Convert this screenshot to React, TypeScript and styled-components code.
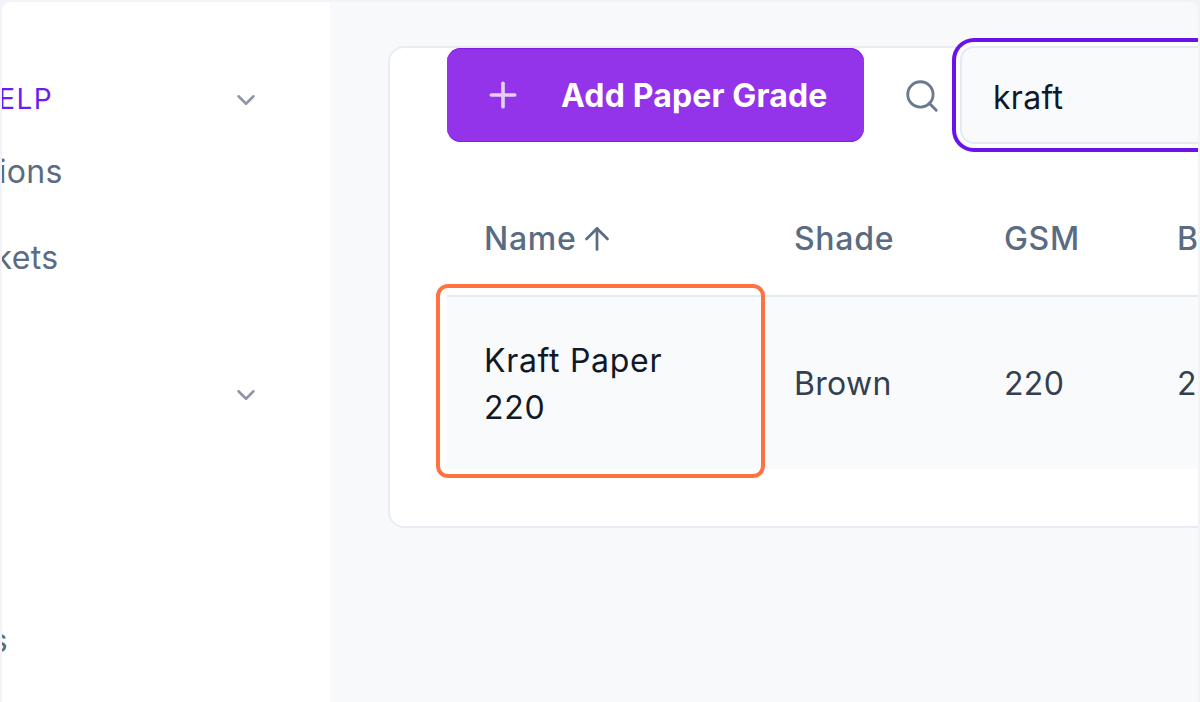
import React from 'react';
import styled, { createGlobalStyle } from 'styled-components';
import { ChevronDown, Plus, Search, ArrowUp } from 'lucide-react';

const GlobalStyle = createGlobalStyle`
  html, body {
    margin: 0;
    height: 100%;
    overflow: hidden;
  }
  body {
    font-family: Inter, "Liberation Sans", sans-serif;
    background: #f3f2f9;
  }
`;

const Frame = styled.div`
  display: flex;
  width: 1200px;
  height: 702px;
  box-sizing: border-box;
  padding: 2px 2px 0 2px;
  overflow: hidden;
  background: #f4f2f9;
`;

const Sidebar = styled.aside`
  width: 328px;
  flex-shrink: 0;
  box-sizing: border-box;
  padding-top: 75px;
  background: #fff;
  border-top-left-radius: 8px;
  overflow: hidden;
`;

const NavItem = styled.div<{ $active?: boolean; $height: number }>`
  display: flex;
  align-items: center;
  justify-content: space-between;
  height: ${props => props.$height}px;
  padding-right: 69px;
  font-size: ${props => (props.$active ? 28 : 32)}px;
  white-space: nowrap;
  color: ${props => (props.$active ? '#6d1cf0' : '#5a6b82')};
  letter-spacing: ${props => (props.$active ? '1.4px' : '0.3px')};
  svg {
    color: #8a96a8;
    flex-shrink: 0;
    margin-top: 2px;
  }
`;

const NavLabel = styled.span<{ $clip: number }>`
  margin-left: ${props => -props.$clip}px;
`;

const Main = styled.main`
  flex: 1;
  min-width: 0;
  padding: 44px 0 0 58px;
  background: #f8f9fb;
  border-top-right-radius: 8px;
  overflow: hidden;
`;

const Card = styled.section`
  width: 1000px;
  height: 482px;
  box-sizing: border-box;
  padding: 0 0 0 57px;
  background: #fff;
  border: 2px solid #e9edf3;
  border-radius: 16px;
`;

const Toolbar = styled.div`
  display: flex;
  align-items: center;
  height: 94px;
`;

const AddButton = styled.button`
  display: flex;
  align-items: center;
  width: 417px;
  height: 94px;
  box-sizing: border-box;
  padding: 0 0 0 36px;
  border: 0;
  border-radius: 14px;
  background: #9333ea;
  box-shadow: inset 0 -1px 0 #7e1fe0, inset 0 1px 0 #7e1fe0;
  color: #fff;
  font: 700 32px Inter, sans-serif;
  letter-spacing: 0.15px;
  white-space: nowrap;
  svg {
    color: #e4cffa;
    margin-right: 38px;
    flex-shrink: 0;
  }
`;

const SearchIcon = styled(Search)`
  margin: 2px 19px 0 39px;
  color: #6b7a8e;
  flex-shrink: 0;
`;

const SearchBox = styled.div`
  display: flex;
  align-items: center;
  width: 420px;
  height: 98px;
  box-sizing: border-box;
  padding: 4px 0 0 31px;
  border: 2px solid #e6ebf2;
  border-radius: 14px;
  background: #f8fafc;
  box-shadow: 0 0 0 4px #fff, 0 0 0 8px #6a12ea;
  font-size: 32px;
  letter-spacing: 0.3px;
  color: #111827;
`;

const TableWrap = styled.div`
  position: relative;
  margin-top: 50px;
`;

const Table = styled.table`
  width: 943px;
  border-collapse: collapse;
  table-layout: fixed;
`;

const HeadCell = styled.th<{ $width: number }>`
  width: ${props => props.$width}px;
  height: 104px;
  padding: 0 0 10px 37px;
  box-sizing: border-box;
  border-bottom: 2px solid #e4eaf2;
  text-align: left;
  vertical-align: middle;
  font-size: 32px;
  font-weight: 500;
  letter-spacing: 0.7px;
  color: #5a6b82;
  white-space: nowrap;
  svg {
    vertical-align: -7px;
    margin-left: 3px;
    color: #5a6b82;
  }
`;

const Row = styled.tr`
  background: #f8fafc;
`;

const Cell = styled.td<{ $dark?: boolean }>`
  height: 173px;
  padding: ${props => (props.$dark ? '2px' : '0')} 40px 0 37px;
  box-sizing: border-box;
  font-size: 32px;
  line-height: 47px;
  letter-spacing: ${props => (props.$dark ? '0.7px' : '0.3px')};
  color: ${props => (props.$dark ? '#111827' : '#333f50')};
`;

const Highlight = styled.div`
  position: absolute;
  left: -11px;
  top: 92px;
  width: 329px;
  height: 194px;
  box-sizing: border-box;
  border: 4px solid #ff7240;
  border-radius: 12px;
  pointer-events: none;
`;

const columns = [
  { label: 'Name', width: 310 },
  { label: 'Shade', width: 210 },
  { label: 'GSM', width: 173 },
  { label: 'BF', width: 250 },
];

export default function App() {
  return (
    <>
      <GlobalStyle />
      <Frame>
        <Sidebar>
          <NavItem $active $height={44}>
            <NavLabel $clip={26}>HELP</NavLabel>
            <ChevronDown size={30} strokeWidth={2} />
          </NavItem>
          <NavItem $height={100}>
            <NavLabel $clip={137}>Transactions</NavLabel>
          </NavItem>
          <NavItem $height={72}>
            <NavLabel $clip={55}>Tickets</NavLabel>
          </NavItem>
          <NavItem $height={201}>
            <NavLabel $clip={140}>Settings</NavLabel>
            <ChevronDown size={30} strokeWidth={2} />
          </NavItem>
          <NavItem $height={292}>
            <NavLabel $clip={119}>Settings</NavLabel>
          </NavItem>
        </Sidebar>
        <Main>
          <Card>
            <Toolbar>
              <AddButton type='button'>
                <Plus size={40} strokeWidth={2.2} />
                Add Paper Grade
              </AddButton>
              <SearchIcon size={38} strokeWidth={1.8} />
              <SearchBox>kraft</SearchBox>
            </Toolbar>
            <TableWrap>
              <Table>
                <thead>
                  <tr>
                    {columns.map(column => (
                      <HeadCell key={column.label} $width={column.width}>
                        {column.label}
                        {column.label === 'Name' && <ArrowUp size={36} strokeWidth={1.8} />}
                      </HeadCell>
                    ))}
                  </tr>
                </thead>
                <tbody>
                  <Row>
                    <Cell $dark>Kraft Paper 220</Cell>
                    <Cell>Brown</Cell>
                    <Cell>220</Cell>
                    <Cell>22</Cell>
                  </Row>
                </tbody>
              </Table>
              <Highlight />
            </TableWrap>
          </Card>
        </Main>
      </Frame>
    </>
  );
}
